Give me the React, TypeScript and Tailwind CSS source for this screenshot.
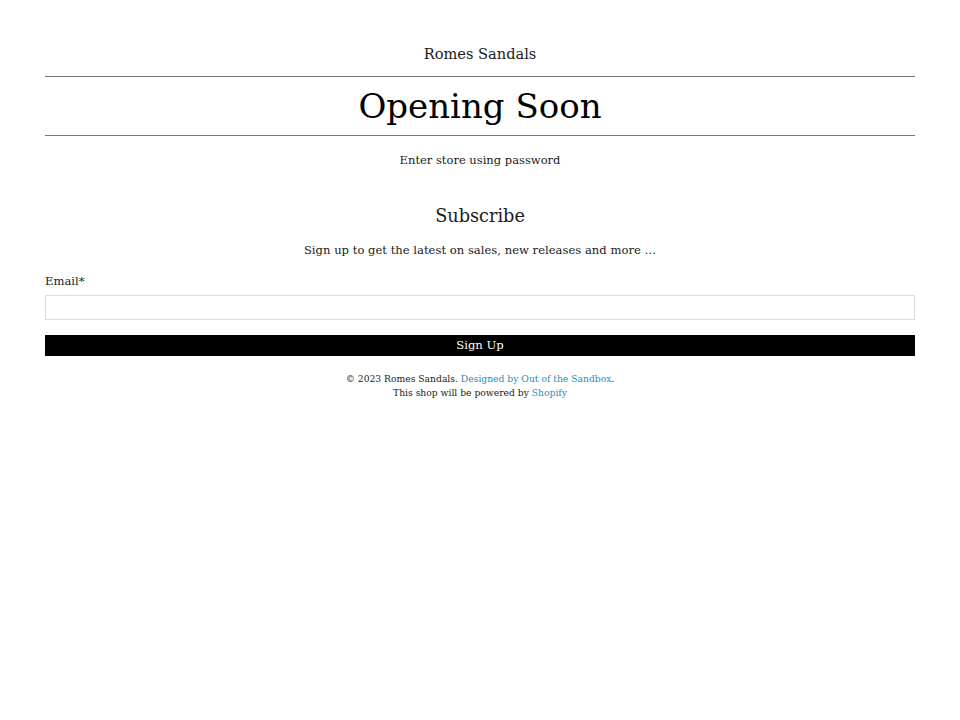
export default function App() {
  return (
    <div className="min-h-screen bg-white text-[#1a1a1a] font-['DejaVu_Serif',serif]">
      <div className="mx-[45px] pt-[44px]">
        <header className="text-center">
          <h2 className="text-[14.6px] leading-[20px]">Romes Sandals</h2>
          <div className="mt-[12px] border-t border-[#777]" />
          <h1 className="text-[34px] leading-[58px] text-black">Opening Soon</h1>
          <div className="border-t border-[#777]" />
          <p className="mt-[16px] text-[11.5px] leading-[16px]">Enter store using password</p>
        </header>

        <section className="mt-[36px]">
          <h3 className="text-center text-[17.7px] leading-[24px]">Subscribe</h3>
          <p className="mt-[14px] text-center text-[11.6px] leading-[16px]">
            Sign up to get the latest on sales, new releases and more …
          </p>
          <form className="mt-[15px]" onSubmit={(e) => e.preventDefault()}>
            <label className="block text-[11.6px] leading-[16px]">Email*</label>
            <input
              type="email"
              className="mt-[6px] block w-full h-[25px] border border-[#ddd] bg-white px-2 text-[12px] outline-none"
            />
            <button
              type="submit"
              className="mt-[15px] block w-full h-[21px] bg-black text-white text-[11.6px] leading-[21px]"
            >
              Sign Up
            </button>
          </form>
        </section>

        <footer className="mt-[16px] text-center text-[9.2px] leading-[14px]">
          <p>
            © 2023 Romes Sandals. <a href="#" className="text-[#2a8bbd]">Designed by Out of the Sandbox</a>.
          </p>
          <p>
            This shop will be powered by <a href="#" className="text-[#2a8bbd]">Shopify</a>
          </p>
        </footer>
      </div>
    </div>
  );
}
